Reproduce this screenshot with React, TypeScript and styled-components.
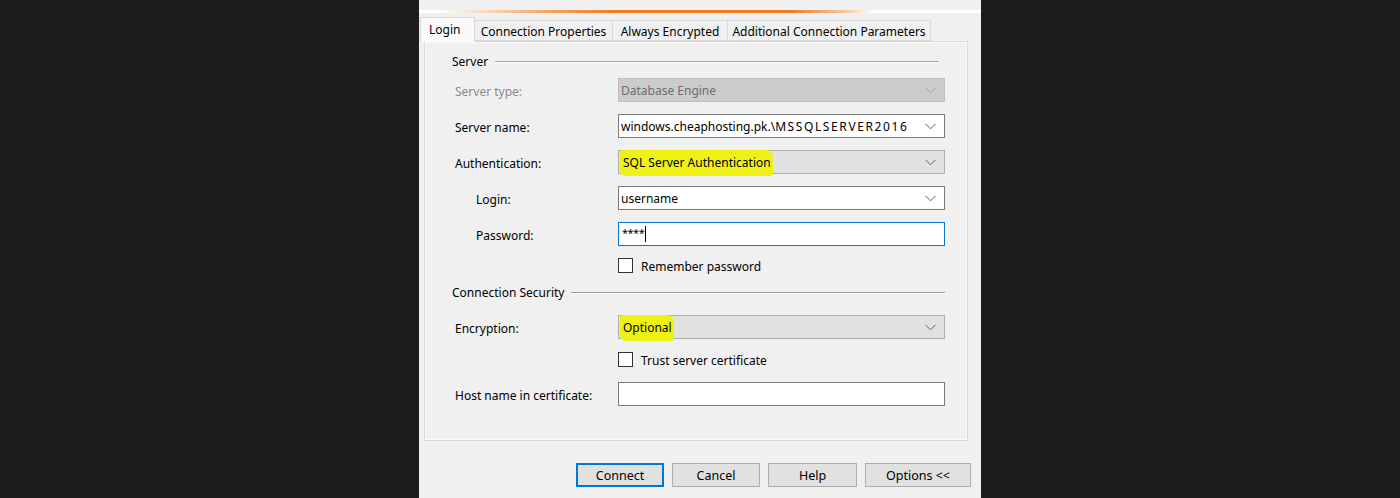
import React from "react";
import styled, { createGlobalStyle } from "styled-components";

const GlobalStyle = createGlobalStyle`
  html, body { margin: 0; padding: 0; background: #1c1c1c; }
  body { font-family: "Noto Sans", "Segoe UI", Arial, sans-serif; }
  * { box-sizing: border-box; }
`;

const FONT = `"Noto Sans", "Segoe UI", Arial, sans-serif`;

const Page = styled.div`
  display: flex;
  justify-content: center;
  height: 498px;
  background: #1c1c1c;
  overflow: hidden;
`;

const Dialog = styled.div`
  width: 562px;
  height: 498px;
  background: #f0f0f0;
  display: flex;
  flex-direction: column;
  font-family: ${FONT};
  font-size: 12px;
  color: #000;
`;

const Accent = styled.div`
  margin-top: 10px;
  height: 3px;
  background: linear-gradient(
    to right,
    #ffffff 0px,
    #ffffff 22px,
    #f7e9dc 45px,
    #f3a560 130px,
    #f07a1c 200px,
    #f07a1c 370px,
    #f6c79c 425px,
    #ffffff 455px,
    #ffffff 562px
  );
`;

const TabStrip = styled.div`
  display: flex;
  align-items: flex-end;
  height: 24px;
  margin-top: 4px;
  padding-left: 1px;
  position: relative;
  z-index: 2;
`;

const Tab = styled.div<{ $w: number; $active?: boolean }>`
  width: ${(p) => p.$w}px;
  height: ${(p) => (p.$active ? 25 : 21)}px;
  margin-bottom: ${(p) => (p.$active ? -1 : 0)}px;
  margin-left: -1px;
  border: 1px solid #d9d9d9;
  border-bottom: ${(p) => (p.$active ? "none" : "1px solid #d9d9d9")};
  background: ${(p) => (p.$active ? "#fafafa" : "#f0f0f0")};
  display: flex;
  align-items: center;
  justify-content: ${(p) => (p.$active ? "flex-start" : "center")};
  padding-left: ${(p) => (p.$active ? 8 : 0)}px;
  padding-bottom: ${(p) => (p.$active ? 2 : 0)}px;
  padding-top: 1px;
  white-space: nowrap;
  position: relative;
  z-index: ${(p) => (p.$active ? 3 : 1)};
  &:first-child { margin-left: 0; }
`;

const Panel = styled.div`
  margin-left: 5px;
  width: 544px;
  height: 400px;
  border: 1px solid #d9d9d9;
  box-shadow: inset 0 0 0 1px #fafafa;
  background: #f0f0f0;
  display: flex;
  flex-direction: column;
  padding-top: 11px;
`;

const GroupHeader = styled.div<{ $mt: number; $mr: number }>`
  display: flex;
  align-items: center;
  height: 16px;
  margin-top: ${(p) => p.$mt}px;
  padding-left: 27px;
  padding-right: ${(p) => p.$mr}px;
  gap: 7px;
  &::after {
    content: "";
    flex: 1;
    height: 1px;
    background: #a0a0a0;
    box-shadow: 0 1px 0 #ffffff;
  }
`;

const Row = styled.div<{ $mt: number }>`
  display: grid;
  grid-template-columns: 163px 327px;
  align-items: center;
  height: 24px;
  margin-top: ${(p) => p.$mt}px;
  padding-left: 30px;
`;

const Label = styled.div<{ $indent?: boolean; $disabled?: boolean }>`
  padding-left: ${(p) => (p.$indent ? 21 : 0)}px;
  padding-top: 2px;
  color: ${(p) => (p.$disabled ? "#8a8a8a" : "#000")};
  white-space: nowrap;
`;

type ComboKind = "white" | "gray" | "disabled";

const Combo = styled.div<{ $kind: ComboKind }>`
  height: 24px;
  display: flex;
  align-items: center;
  justify-content: space-between;
  padding: 1px 8px 0 2px;
  border: 1px solid
    ${(p) => (p.$kind === "white" ? "#7a7a7a" : p.$kind === "gray" ? "#adadad" : "#bfbfbf")};
  background: ${(p) => (p.$kind === "white" ? "#ffffff" : p.$kind === "gray" ? "#e1e1e1" : "#cccccc")};
  color: ${(p) => (p.$kind === "disabled" ? "#6d6d6d" : "#000")};
  white-space: nowrap;
`;

const Wide = styled.span`
  letter-spacing: 1.6px;
`;

const TextBox = styled.div<{ $focused?: boolean }>`
  height: 24px;
  display: flex;
  align-items: center;
  padding-left: 3px;
  border: 1px solid ${(p) => (p.$focused ? "#0078d7" : "#7a7a7a")};
  background: #ffffff;
`;

const Caret = styled.span`
  display: inline-block;
  width: 1px;
  height: 16px;
  background: #000;
  margin-left: 1px;
`;

const Mask = styled.span`
  font-size: 11px;
  letter-spacing: -0.5px;
  position: relative;
  top: -2px;
`;

const Highlight = styled.span`
  background: #eef214;
  padding: 4px 2px 5px 3px;
  margin-left: -1px;
  border-radius: 2px 7px 3px 6px;
`;

const CheckRow = styled.div<{ $mt: number }>`
  display: flex;
  align-items: center;
  gap: 8px;
  height: 15px;
  margin-top: ${(p) => p.$mt}px;
  padding-left: 193px;
  padding-top: 1px;
`;

const Box = styled.span`
  width: 15px;
  height: 15px;
  margin-top: -1px;
  border: 1px solid #333333;
  background: #ffffff;
`;

const ButtonBar = styled.div`
  display: flex;
  justify-content: flex-end;
  gap: 8px;
  margin-top: 22px;
  padding-right: 10px;
`;

const Button = styled.div<{ $w: number; $default?: boolean }>`
  width: ${(p) => p.$w}px;
  height: 24px;
  display: flex;
  align-items: center;
  justify-content: center;
  background: #e1e1e1;
  border: 1px solid ${(p) => (p.$default ? "#0078d7" : "#adadad")};
  box-shadow: ${(p) => (p.$default ? "inset 0 0 0 1px #0078d7" : "none")};
  font-size: 12.5px;
`;

const Chevron = ({ color = "#606060" }: { color?: string }) => (
  <svg width="11" height="7" viewBox="0 0 11 7">
    <polyline points="0.5,0.8 5.5,5.8 10.5,0.8" fill="none" stroke={color} strokeWidth="1" />
  </svg>
);

const tabs = [
  { label: "Login", w: 55, active: true },
  { label: "Connection Properties", w: 139 },
  { label: "Always Encrypted", w: 116 },
  { label: "Additional Connection Parameters", w: 204 },
];

export default function App() {
  return (
    <>
      <GlobalStyle />
      <Page>
        <Dialog>
          <Accent />
          <TabStrip>
            {tabs.map((t) => (
              <Tab key={t.label} $w={t.w} $active={t.active}>
                {t.label}
              </Tab>
            ))}
          </TabStrip>
          <Panel>
            <GroupHeader $mt={0} $mr={29}>Server</GroupHeader>
            <Row $mt={9}>
              <Label $disabled>Server type:</Label>
              <Combo $kind="disabled">
                Database Engine
                <Chevron color="#a6a6a6" />
              </Combo>
            </Row>
            <Row $mt={12}>
              <Label>Server name:</Label>
              <Combo $kind="white">
                <span>
                  windows.cheaphosting.pk.\<Wide>MSSQLSERVER2016</Wide>
                </span>
                <Chevron />
              </Combo>
            </Row>
            <Row $mt={12}>
              <Label>Authentication:</Label>
              <Combo $kind="gray">
                <Highlight>SQL Server Authentication</Highlight>
                <Chevron />
              </Combo>
            </Row>
            <Row $mt={12}>
              <Label $indent>Login:</Label>
              <Combo $kind="white">
                username
                <Chevron />
              </Combo>
            </Row>
            <Row $mt={12}>
              <Label $indent>Password:</Label>
              <TextBox $focused>
                <Mask>****</Mask>
                <Caret />
              </TextBox>
            </Row>
            <CheckRow $mt={12}>
              <Box />
              Remember password
            </CheckRow>
            <GroupHeader $mt={11} $mr={22}>Connection Security</GroupHeader>
            <Row $mt={15}>
              <Label>Encryption:</Label>
              <Combo $kind="gray">
                <Highlight>Optional</Highlight>
                <Chevron />
              </Combo>
            </Row>
            <CheckRow $mt={13}>
              <Box />
              Trust server certificate
            </CheckRow>
            <Row $mt={15}>
              <Label>Host name in certificate:</Label>
              <TextBox />
            </Row>
          </Panel>
          <ButtonBar>
            <Button $w={88} $default>Connect</Button>
            <Button $w={88}>Cancel</Button>
            <Button $w={89}>Help</Button>
            <Button $w={106}>Options &lt;&lt;</Button>
          </ButtonBar>
        </Dialog>
      </Page>
    </>
  );
}
